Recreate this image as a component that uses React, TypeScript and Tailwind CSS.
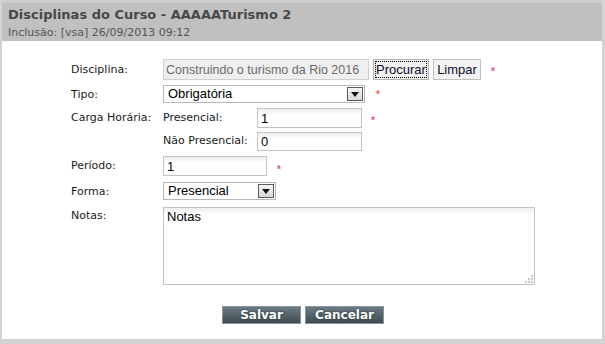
import React from 'react'

const label = "font-['DejaVu_Sans',Verdana,sans-serif] text-[11px] text-[#1a1a1a] leading-[13px]"
const field = "font-['Liberation_Sans',Arial,sans-serif] text-[13px]"
const inputBox =
  'border border-[#c3c3c3] bg-[linear-gradient(#eceeed,#ffffff_6px)] px-[3px] text-black outline-none'

const Star = ({ orange = false, top }: { orange?: boolean; top: string }) => (
  <span
    className={`block font-['Liberation_Sans',Arial,sans-serif] text-[10px] leading-[10px] font-bold ${top} ${
      orange ? 'text-[#ee6a3a]' : 'text-[#e2587a]'
    }`}
  >
    *
  </span>
)

const FakeSelect = ({ value, width }: { value: string; width: string }) => (
  <div className={`flex h-[18px] items-center justify-between border border-[#b8b8b8] bg-white ${width}`}>
    <span className={`${field} pl-[4px] leading-[16px] text-black`}>{value}</span>
    <span className="mr-[1px] flex h-[14px] w-[16px] items-center justify-center border border-[#5a5a5a] bg-[linear-gradient(#f4f4f4,#d8d8d8)]">
      <svg width="8" height="5" viewBox="0 0 8 5">
        <path d="M0 0h8L4 5z" fill="#111" />
      </svg>
    </span>
  </div>
)

export default function App() {
  return (
    <div className="h-[344px] w-[605px] bg-[#d3d3d3] pl-[2px]">
      <div className="flex h-[339px] w-[600px] flex-col bg-white">
        {/* header */}
        <div className="h-[41px] border-t-[3px] border-[#cdcdcd] bg-[#c0c0c0] px-[6px]">
          <div className="pt-[4px] font-['DejaVu_Sans',Verdana,sans-serif] text-[13px] leading-[16px] font-bold text-[#484848]">
            Disciplinas do Curso - AAAAATurismo 2
          </div>
          <div className="pt-[3px] font-['DejaVu_Sans',Verdana,sans-serif] text-[11px] leading-[13px] text-[#555]">
            Inclusão: [vsa] 26/09/2013 09:12
          </div>
        </div>

        {/* form */}
        <div className="flex flex-col pt-[18px] pl-[69px]">
          <div className="flex h-[21px] items-start">
            <div className={`${label} w-[92px] pt-[4px]`}>Disciplina:</div>
            <input
              readOnly
              defaultValue="Construindo o turismo da Rio 2016"
              className="h-[21px] w-[206px] border border-[#cfcfcf] bg-[#efefef] px-[2px] font-['Liberation_Sans',Arial,sans-serif] text-[12.5px] text-[#6b6b6b] outline-none"
            />
            <button className={`${field} ml-[4px] h-[21px] w-[56px] border border-[#b5b5b5] bg-[#f1f1f1] p-[1px] text-[#0b0b2a]`}>
              <span className="flex h-full items-center justify-center border border-dotted border-black">Procurar</span>
            </button>
            <button className={`${field} ml-[4px] h-[21px] w-[48px] border border-[#c0c0c0] bg-[#f4f4f4] text-[#0b0b2a]`}>
              Limpar
            </button>
            <span className="ml-[10px]">
              <Star top="pt-[8px]" />
            </span>
          </div>

          <div className="mt-[5px] flex h-[17px] items-start">
            <div className={`${label} w-[92px] pt-[3px]`}>Tipo:</div>
            <FakeSelect value="Obrigatória" width="w-[202px]" />
            <span className="ml-[11px]">
              <Star orange top="pt-[5px]" />
            </span>
          </div>

          <div className="mt-[6px] flex items-start">
            <div className={`${label} w-[92px] pt-[3px]`}>Carga Horária:</div>
            <div className="flex flex-col">
              <div className="flex h-[20px] items-start">
                <div className={`${label} w-[94px] pt-[3px]`}>Presencial:</div>
                <input readOnly defaultValue="1" className={`${field} ${inputBox} h-[20px] w-[105px]`} />
                <span className="ml-[9px]">
                  <Star top="pt-[8px]" />
                </span>
              </div>
              <div className="mt-[4px] flex h-[19px] items-start">
                <div className={`${label} w-[94px] pt-[2px]`}>Não Presencial:</div>
                <input readOnly defaultValue="0" className={`${field} ${inputBox} h-[19px] w-[105px]`} />
              </div>
            </div>
          </div>

          <div className="mt-[5px] flex h-[20px] items-start">
            <div className={`${label} w-[92px] pt-[3px]`}>Período:</div>
            <input readOnly defaultValue="1" className={`${field} ${inputBox} h-[20px] w-[104px]`} />
            <span className="ml-[10px]">
              <Star top="pt-[9px]" />
            </span>
          </div>

          <div className="mt-[6px] flex h-[18px] items-start">
            <div className={`${label} w-[92px] pt-[3px]`}>Forma:</div>
            <FakeSelect value="Presencial" width="w-[113px]" />
          </div>

          <div className="mt-[7px] flex items-start">
            <div className={`${label} w-[92px] pt-[2px]`}>Notas:</div>
            <div className="relative">
              <textarea
                readOnly
                defaultValue="Notas"
                className={`${field} ${inputBox} block h-[78px] w-[372px] resize-none pt-[1px] leading-[15px]`}
              />
              <div className="absolute right-[2px] bottom-[2px] grid grid-cols-3 gap-[1px]">
                <span className="h-[2px] w-[2px]" />
                <span className="h-[2px] w-[2px]" />
                <span className="h-[2px] w-[2px] bg-[#c8c8c8]" />
                <span className="h-[2px] w-[2px]" />
                <span className="h-[2px] w-[2px] bg-[#c8c8c8]" />
                <span className="h-[2px] w-[2px] bg-[#c8c8c8]" />
                <span className="h-[2px] w-[2px] bg-[#c8c8c8]" />
                <span className="h-[2px] w-[2px] bg-[#c8c8c8]" />
                <span className="h-[2px] w-[2px] bg-[#c8c8c8]" />
              </div>
            </div>
          </div>
        </div>

        {/* actions */}
        <div className="mt-[21px] flex gap-[4px] pl-[220px]">
          {['Salvar', 'Cancelar'].map((t) => (
            <button
              key={t}
              className="h-[18px] w-[79px] border border-[#8b9599] bg-[linear-gradient(#6c7c84,#3e4b51)] font-['DejaVu_Sans',Verdana,sans-serif] text-[12px] leading-[16px] font-bold text-white [text-shadow:0_0_2px_#1d2a30]"
            >
              {t}
            </button>
          ))}
        </div>
      </div>
    </div>
  )
}
